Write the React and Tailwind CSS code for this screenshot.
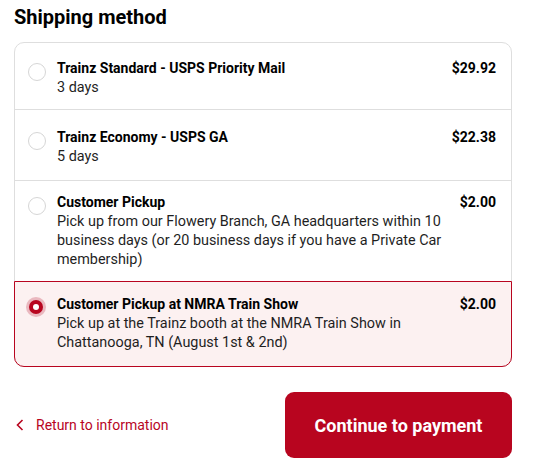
import React, { useState } from "react";

const options = [
  {
    id: "standard",
    title: "Trainz Standard - USPS Priority Mail",
    desc: "3 days",
    price: "$29.92",
    pad: "pt-[16px] pb-[12px]",
  },
  {
    id: "economy",
    title: "Trainz Economy - USPS GA",
    desc: "5 days",
    price: "$22.38",
    pad: "pt-[18px] pb-[14px]",
  },
  {
    id: "pickup",
    title: "Customer Pickup",
    desc: "Pick up from our Flowery Branch, GA headquarters within 10 business days (or 20 business days if you have a Private Car membership)",
    price: "$2.00",
    pad: "pt-[12px] pb-[12px]",
  },
  {
    id: "nmra",
    title: "Customer Pickup at NMRA Train Show",
    desc: "Pick up at the Trainz booth at the NMRA Train Show in Chattanooga, TN (August 1st & 2nd)",
    price: "$2.00",
    pad: "pt-[13px] pb-[14px]",
  },
];

function Radio({ checked }) {
  if (checked) {
    return (
      <span className="mt-[2px] ml-[-2px] flex h-[20px] w-[20px] shrink-0 items-center justify-center rounded-full bg-[#eab8bf]">
        <span className="flex h-[14px] w-[14px] items-center justify-center rounded-full bg-[#b8051f]">
          <span className="h-[6px] w-[6px] rounded-full bg-white" />
        </span>
      </span>
    );
  }
  return (
    <span className="mt-[4px] h-[18px] w-[18px] shrink-0 rounded-full border border-[#d6d6d6] bg-white" />
  );
}

export default function App() {
  const [selected, setSelected] = useState("nmra");

  return (
    <div
      className="w-[548px] bg-white px-[14px] pt-[3px] text-[#1a1a1a]"
      style={{ fontFamily: "Roboto, 'Liberation Sans', sans-serif" }}
    >
      <h2 className="text-[20px] font-bold leading-[28px] text-black">Shipping method</h2>

      <div className="mt-[11px] w-[498px] rounded-[10px] border border-[#dedede]">
        {options.map((o, i) => {
          const active = o.id === selected;
          const first = i === 0;
          const last = i === options.length - 1;
          const frame = active
            ? "-mx-px -mb-px border border-[#b8051f] bg-[#fcf1f1]"
            : first
              ? ""
              : "border-t border-[#dedede]";
          return (
            <label
              key={o.id}
              onClick={() => setSelected(o.id)}
              className={[
                "flex cursor-pointer items-start gap-[11px] pl-[13px] pr-[15px]",
                o.pad,
                first ? "rounded-t-[10px]" : "",
                last ? "rounded-b-[10px]" : "",
                frame,
              ].join(" ")}
            >
              <Radio checked={active} />
              <div className="flex min-w-0 flex-1 items-start justify-between gap-4">
                <div className="leading-[19px]">
                  <div className="text-[14px] font-bold text-black">{o.title}</div>
                  <div className="text-[14.4px] text-[#1f1f1f]">{o.desc}</div>
                </div>
                <div className="shrink-0 text-[14px] font-bold leading-[19px] text-black">{o.price}</div>
              </div>
            </label>
          );
        })}
      </div>

      <div className="mt-[25px] flex w-[498px] items-center justify-between">
        <a href="#" className="flex items-center gap-[12px] pl-[2px] text-[14px] text-[#b8051f]">
          <svg width="8" height="12" viewBox="0 0 8 12" fill="none">
            <path d="M6.5 1 L1.5 6 L6.5 11" stroke="#b8051f" strokeWidth="1.6" />
          </svg>
          Return to information
        </a>
        <button className="flex h-[66px] w-[227px] items-center justify-center rounded-[9px] bg-[#b8051f] text-[18px] font-bold text-white">
          Continue to payment
        </button>
      </div>
    </div>
  );
}
